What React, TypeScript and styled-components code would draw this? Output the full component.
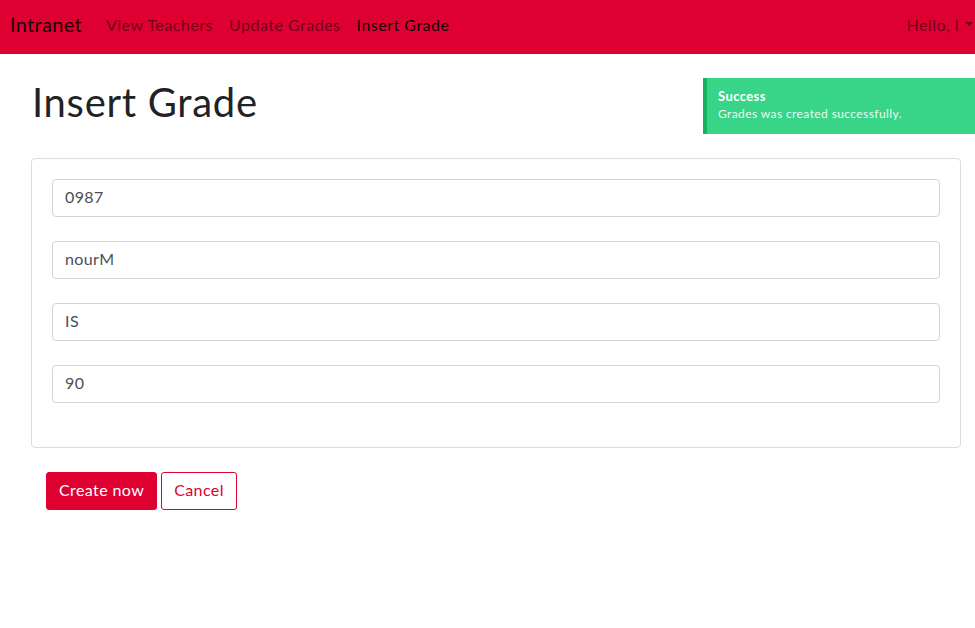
import React from 'react';
import styled, { createGlobalStyle } from 'styled-components';

const GlobalStyle = createGlobalStyle`
    html, body {
        margin: 0;
        padding: 0;
        background: #ffffff;
    }
    body {
        font-family: Lato, "Open Sans", sans-serif;
        color: #212529;
    }
    * {
        box-sizing: border-box;
    }
`;

const Navbar = styled.nav`
    height: 54px;
    background: #dd0031;
    display: flex;
    align-items: center;
    padding: 0 2px 6px 10px;
`;

const Brand = styled.a`
    font-size: 20px;
    letter-spacing: 0.3px;
    color: rgba(0, 0, 0, 0.9);
    margin-right: 24px;
    text-decoration: none;
`;

const NavList = styled.div`
    display: flex;
    gap: 16px;
    flex: 1;
`;

const NavLink = styled.a<{ $active?: boolean }>`
    font-size: 16px;
    letter-spacing: 0.5px;
    color: ${p => (p.$active ? 'rgba(0, 0, 0, 0.9)' : 'rgba(0, 0, 0, 0.5)')};
    text-decoration: none;
`;

const UserMenu = styled.div`
    display: flex;
    align-items: center;
    gap: 6px;
    font-size: 16px;
    letter-spacing: 0.5px;
    color: rgba(0, 0, 0, 0.5);
`;

const Caret = styled.span`
    width: 0;
    height: 0;
    border-left: 4px solid transparent;
    border-right: 4px solid transparent;
    border-top: 4px solid rgba(0, 0, 0, 0.5);
`;

const Main = styled.main`
    padding: 24px 14px 0 31px;
    position: relative;
`;

const Title = styled.h1`
    font-size: 40px;
    font-weight: 400;
    letter-spacing: 0.7px;
    margin: 0 0 0 1px;
    line-height: 48px;
    color: #1f2326;
`;

const Toast = styled.div`
    position: absolute;
    top: 24px;
    left: 703px;
    width: 290px;
    height: 56px;
    background: #38d488;
    border-left: 4px solid #17b25e;
    padding: 10px 11px;
    color: #ffffff;
`;

const ToastTitle = styled.div`
    font-size: 13px;
    font-weight: 700;
    letter-spacing: 0.4px;
    line-height: 16px;
`;

const ToastBody = styled.div`
    font-size: 12px;
    letter-spacing: 0.4px;
    line-height: 20px;
    opacity: 0.9;
`;

const Card = styled.div`
    margin-top: 32px;
    border: 1px solid #dcdcdc;
    border-radius: 4px;
    padding: 20px;
`;

const FormGroup = styled.div`
    margin-bottom: 24px;
`;

const Input = styled.input`
    display: block;
    width: 100%;
    height: 38px;
    padding: 4px 12px 8px;
    font-family: inherit;
    font-size: 16px;
    letter-spacing: 0.4px;
    color: #495057;
    border: 1px solid #ced4da;
    border-radius: 4px;
    background: #ffffff;
    outline: none;
`;

const Actions = styled.div`
    display: flex;
    gap: 4px;
    padding: 24px 15px;
`;

const Button = styled.button<{ $outline?: boolean }>`
    height: 38px;
    padding: 0 12px 3px;
    font-family: inherit;
    font-size: 16px;
    letter-spacing: 0.4px;
    border-radius: 3px;
    border: 1px solid #dd0031;
    background: ${p => (p.$outline ? '#ffffff' : '#dd0031')};
    color: ${p => (p.$outline ? '#dd0031' : '#ffffff')};
    cursor: pointer;
`;

const fields = ['0987', 'nourM', 'IS', '90'];

const App: React.FC = () => (
    <>
        <GlobalStyle />
        <Navbar>
            <Brand href="#">Intranet</Brand>
            <NavList>
                <NavLink href="#">View Teachers</NavLink>
                <NavLink href="#">Update Grades</NavLink>
                <NavLink href="#" $active>Insert Grade</NavLink>
            </NavList>
            <UserMenu>
                Hello, l
                <Caret />
            </UserMenu>
        </Navbar>
        <Main>
            <Title>Insert Grade</Title>
            <Toast>
                <ToastTitle>Success</ToastTitle>
                <ToastBody>Grades was created successfully.</ToastBody>
            </Toast>
            <Card>
                {fields.map((value, i) => (
                    <FormGroup key={i}>
                        <Input defaultValue={value} />
                    </FormGroup>
                ))}
            </Card>
            <Actions>
                <Button>Create now</Button>
                <Button $outline>Cancel</Button>
            </Actions>
        </Main>
    </>
);

export default App;
